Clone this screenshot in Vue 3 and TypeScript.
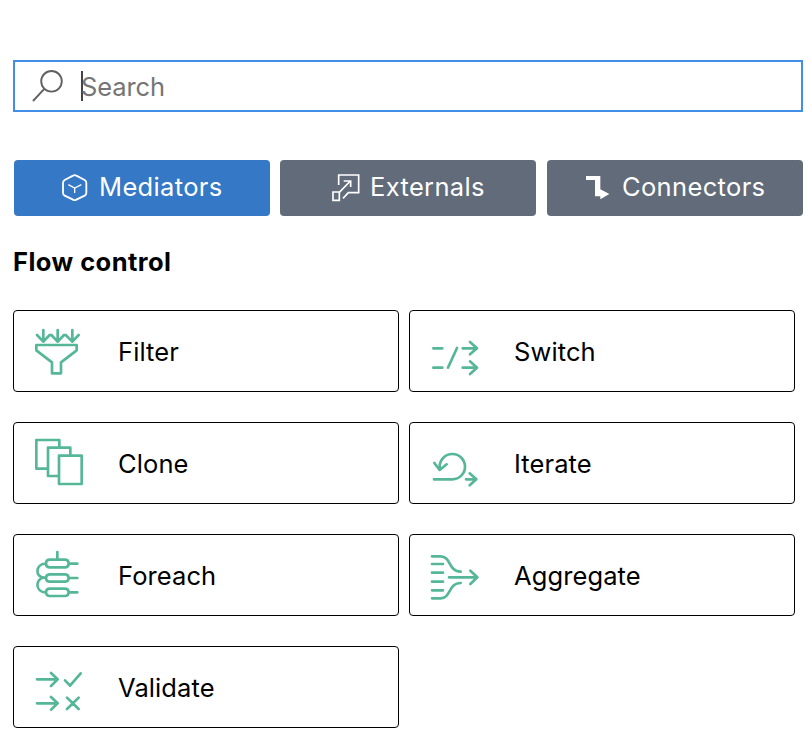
<script setup lang="ts">
import { ref } from 'vue'

interface Tab {
  id: string
  label: string
  viewBox: string
}

interface Mediator {
  id: string
  label: string
  viewBox: string
  path: string
}

const query = ref('')
const active = ref('mediators')

const tabs: Tab[] = [
  { id: 'mediators', label: 'Mediators', viewBox: '180 66 90 90' },
  { id: 'externals', label: 'Externals', viewBox: '180 66 90 90' },
  { id: 'connectors', label: 'Connectors', viewBox: '132 66 90 90' },
]

const mediators: Mediator[] = [
  {
    id: 'filter',
    label: 'Filter',
    viewBox: '90 72 168 168',
    path: 'M130 90V125M111 105L130 125L149 105M173 90V125M154 105L173 125L192 105M217 90V125M197 105L217 125L236 105M109 135H230V151L183 187V220H156V187L109 151Z',
  },
  {
    id: 'switch',
    label: 'Switch',
    viewBox: '78 72 168 168',
    path: 'M100 145H127M100 203H127M171 144L144 203M188 145H231M210 126L231 145L210 163M188 203H231M210 184L231 203L210 222',
  },
  {
    id: 'clone',
    label: 'Clone',
    viewBox: '90 72 168 168',
    path: 'M178 105V84H109V170H142M211 129V107H144V192H175M177 131H245V216H177Z',
  },
  {
    id: 'iterate',
    label: 'Iterate',
    viewBox: '78 72 168 168',
    path: 'M102 202H157A38 38 0 1 0 119 164V174M103 153L119 174L140 157M198 202H229M209 184L229 202L209 220',
  },
  {
    id: 'foreach',
    label: 'Foreach',
    viewBox: '90 72 168 168',
    path: 'M172 84V106M148 107H196Q206 108 206 118.500Q206 129 196 130H148Q138 129 138 118.500Q138 108 148 107ZM148 151H196Q206 152 206 162Q206 172 196 173H148Q138 172 138 162Q138 152 148 151ZM148 194H196Q206 195 206 205Q206 215 196 216H148Q138 215 138 205Q138 195 148 194ZM206 119H232M206 162H232M206 205H232M137 119C105 119 105 161 132 161H137M132 161C105 163 105 205 137 205',
  },
  {
    id: 'aggregate',
    label: 'Aggregate',
    viewBox: '78 72 168 168',
    path: 'M96 97H122C153 97 145 143 182 143M96 223H122C153 223 145 177 182 177M96 120H129M96 146H129M96 173H129M96 199H129M147 160H232M211 140L232 160L211 180',
  },
  {
    id: 'validate',
    label: 'Validate',
    viewBox: '90 72 168 168',
    path: 'M111 130H173M153 111L173 130L153 150M195 133L210 149L242 112M111 202H173M153 183L173 202L153 221M201 185L236 219M236 185L201 219',
  },
]
</script>

<template>
  <main class="palette">
    <label class="search">
      <svg class="search-icon" viewBox="0 0 32 34" aria-hidden="true">
        <circle cx="19.500" cy="12.300" r="10.300" />
        <path d="M12.300 19.800L1 32" />
      </svg>
      <span class="caret"></span>
      <input v-model="query" class="search-input" type="text" placeholder="Search" />
    </label>

    <nav class="tabs">
      <button
        v-for="tab in tabs"
        :key="tab.id"
        type="button"
        class="tab"
        :class="[tab.id, { active: active === tab.id }]"
        @click="active = tab.id"
      >
        <svg class="tab-icon" :viewBox="tab.viewBox" aria-hidden="true">
          <g v-if="tab.id === 'mediators'">
            <path class="outline" d="M219 74Q224 71 229 74L254 87Q259 90 259 96V125Q259 131 254 134L229 146Q224 149 219 146L194 134Q189 131 189 125V96Q189 90 194 87Z" />
            <path class="thin" d="M205 101L224 111L244 101M224 111V126" />
          </g>
          <g v-else-if="tab.id === 'externals'" class="box">
            <path d="M206 102V72H266V125H235L219 142M189 123H208V148H189ZM208 124L241 90M221 90H242V108" />
          </g>
          <path v-else class="solid" d="M138 75H181V115L208 129L181 145V136H165V87H138Z" />
        </svg>
        <span class="tab-label">{{ tab.label }}</span>
      </button>
    </nav>

    <h2 class="heading">Flow control</h2>

    <section class="grid">
      <div v-for="item in mediators" :key="item.id" class="card">
        <svg class="card-icon" :viewBox="item.viewBox" aria-hidden="true">
          <path :d="item.path" />
        </svg>
        <span class="card-label">{{ item.label }}</span>
      </div>
    </section>
  </main>
</template>

<style>
body {
  background: #fff;
}
</style>

<style scoped>
.palette {
  box-sizing: border-box;
  width: 810px;
  height: 743px;
  padding: 60px 7px 0 13px;
  overflow: hidden;
  background: #fff;
  color: #000;
  font-family: Inter, 'Liberation Sans', sans-serif;
  font-size: 25.5px;
}

.search {
  box-sizing: border-box;
  display: flex;
  align-items: center;
  width: 790px;
  height: 52px;
  padding-left: 17px;
  border: 2px solid #418ee6;
}

.search-icon {
  width: 32px;
  height: 34px;
  fill: none;
  stroke: #616161;
  stroke-width: 1.9;
}

.caret {
  width: 1.5px;
  height: 30px;
  margin-left: 17px;
  background: #444;
}

.search-input {
  flex: 1;
  min-width: 0;
  margin-left: -1.5px;
  padding: 0;
  border: 0;
  outline: 0;
  background: none;
  color: #000;
  font: inherit;
  letter-spacing: -0.1px;
}

.search-input::placeholder {
  color: #757575;
  opacity: 1;
}

.tabs {
  display: grid;
  grid-template-columns: 266px 267px 256px;
  margin: 48px 0 0 1px;
}

.tab {
  display: flex;
  align-items: center;
  width: 256px;
  height: 56px;
  padding: 0 0 0 46px;
  border: 0;
  border-radius: 4px;
  background: #616b7a;
  color: #fff;
  font: inherit;
  letter-spacing: 0.35px;
}

.tab.active {
  background: #3478c6;
}

.tab.externals {
  padding-left: 50px;
}

.tab.externals .tab-label {
  margin-left: 10px;
}

.tab.connectors {
  padding-left: 37px;
}

.tab.connectors .tab-label {
  margin-left: 8px;
}

.tab-icon {
  flex: none;
  width: 30px;
  height: 30px;
  fill: none;
  stroke: #fff;
}

.outline {
  stroke-width: 5.5;
}

.thin {
  stroke-width: 4;
}

.box {
  stroke-width: 5;
}

.solid {
  fill: #fff;
  stroke: none;
}

.tab-label {
  margin: -4px 0 0 9px;
}

.heading {
  margin: 30px 0 0;
  font-size: 25.5px;
  font-weight: 700;
  line-height: 32px;
  letter-spacing: 0.45px;
}

.grid {
  display: grid;
  grid-template-columns: repeat(2, 386px);
  gap: 30px 10px;
  margin-top: 32px;
}

.card {
  box-sizing: border-box;
  display: flex;
  align-items: center;
  height: 82px;
  padding-left: 16px;
  border: 1px solid #000;
  border-radius: 4px;
}

.card-icon {
  flex: none;
  width: 56px;
  height: 56px;
  margin-top: 2px;
  fill: none;
  stroke: #56b798;
  stroke-width: 8;
  stroke-linecap: round;
  stroke-linejoin: round;
}

.card-label {
  margin: 0 0 0 32px;
  letter-spacing: 0.1px;
}
</style>
